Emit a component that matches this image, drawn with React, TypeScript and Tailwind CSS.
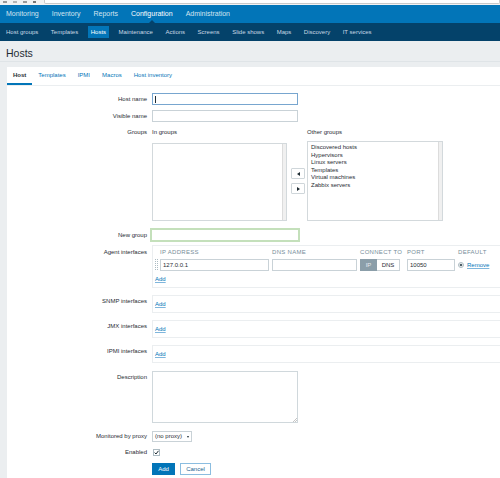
import React from "react";

const mainNav = ["Monitoring", "Inventory", "Reports", "Configuration", "Administration"];
const subNav = [
  "Host groups",
  "Templates",
  "Hosts",
  "Maintenance",
  "Actions",
  "Screens",
  "Slide shows",
  "Maps",
  "Discovery",
  "IT services",
];
const tabs = ["Host", "Templates", "IPMI", "Macros", "Host inventory"];
const otherGroups = [
  "Discovered hosts",
  "Hypervisors",
  "Linux servers",
  "Templates",
  "Virtual machines",
  "Zabbix servers",
];

const FormRow = ({
  label,
  labelClass = "",
  className = "",
  children,
}: {
  label: string;
  labelClass?: string;
  className?: string;
  children: React.ReactNode;
}) => (
  <div className={`flex ${className}`}>
    <div className={`w-[140px] shrink-0 text-right text-[#1f2c33] ${labelClass}`}>{label}</div>
    <div className="ml-[5px] min-w-0 flex-1">{children}</div>
  </div>
);

const AddLink = () => (
  <span className="text-[#0275b8] underline decoration-[#7fb6dc] underline-offset-[1px]">Add</span>
);

const DragHandle = () => (
  <svg width="4" height="12" viewBox="0 0 4 12" className="shrink-0">
    {[0, 1, 2, 3, 4, 5].map((r) => (
      <g key={r} fill="#acbbc2">
        <rect x="0" y={r * 2} width="1" height="1" />
        <rect x="2" y={r * 2} width="1" height="1" />
      </g>
    ))}
  </svg>
);

const InterfaceBox = ({ label }: { label: string }) => (
  <FormRow label={label} labelClass="leading-[10px] pt-[1px]" className="mt-[7px]">
    <div className="h-[18px] border border-r-0 border-[#ebeef0] pl-[2px] pt-[4px] leading-[8px]">
      <AddLink />
    </div>
  </FormRow>
);

export default function App() {
  return (
    <div className="flex h-[478px] w-[500px] flex-col overflow-hidden bg-[#ebeef0] font-['Liberation_Sans',Arial,sans-serif] text-[6px]">
      {/* browser chrome strip */}
      <div className="flex h-[5px] shrink-0 items-start bg-[#f2f2f2]">
        <div className="ml-[3px] mt-[1px] h-[2px] w-[4px] bg-[#9a9a9a]" />
        <div className="ml-[6px] mt-[1px] h-[2px] w-[4px] bg-[#b5b5b5]" />
        <div className="ml-[6px] mt-[1px] h-[2px] w-[4px] bg-[#9a9a9a]" />
        <div className="ml-[6px] mt-[1px] h-[2px] w-[3px] bg-[#777]" />
        <div className="ml-[8px] h-[4px] flex-1 rounded-b-[2px] border-x border-b border-[#c9c9c9] bg-white" />
      </div>

      {/* main nav */}
      <div className="flex h-[18px] shrink-0 items-center gap-[13px] bg-[#0275b8] pl-[6px] text-[7px] text-[#d3e4f0]">
        {mainNav.map((item) => (
          <div key={item} className={`relative leading-[18px] ${item === "Configuration" ? "text-white" : ""}`}>
            {item}
            {item === "Configuration" && (
              <div className="absolute bottom-0 left-1/2 -ml-[3px] h-0 w-0 border-x-[3px] border-b-[3px] border-x-transparent border-b-[#04426a]" />
            )}
          </div>
        ))}
      </div>

      {/* sub nav */}
      <div className="flex h-[18px] shrink-0 items-center gap-[6.5px] bg-[#04426a] pl-[3px] text-[#c9d8e3]">
        {subNav.map((item) => (
          <div
            key={item}
            className={`h-[12px] px-[3px] leading-[12px] ${item === "Hosts" ? "bg-[#0275b8] text-white" : ""}`}
          >
            {item}
          </div>
        ))}
      </div>

      {/* page header */}
      <div className="h-[21px] shrink-0 border-b border-[#dfe4e7] pl-[6px] pt-[6px] text-[10.5px] leading-[12px] text-[#1f2c33]">
        Hosts
      </div>

      {/* white panel */}
      <div className="ml-[7px] mt-[5px] flex-1 bg-white">
        <div className="flex h-[19px] border-b border-[#ebeef0]">
          {tabs.map((tab) => (
            <div
              key={tab}
              className={`px-[6px] leading-[17px] ${
                tab === "Host"
                  ? "border-b-2 border-[#0275b8] font-bold text-[#1f2c33]"
                  : "text-[#0275b8]"
              }`}
            >
              {tab}
            </div>
          ))}
        </div>

        <div className="pt-[7px]">
          <FormRow label="Host name" labelClass="leading-[12px]">
            <div className="flex h-[12px] w-[146px] items-center border border-[#78a6cf] bg-white pl-[2px]">
              <div className="h-[7px] w-px bg-[#1f2c33]" />
            </div>
          </FormRow>

          <FormRow label="Visible name" labelClass="leading-[12px]" className="mt-[5px]">
            <div className="h-[12px] w-[146px] border border-[#c9d2d7] bg-white" />
          </FormRow>

          <FormRow label="Groups" labelClass="leading-[10px]" className="mt-[5px]">
            <div className="flex items-start">
              <div>
                <div className="leading-[10px] text-[#1f2c33]">In groups</div>
                <div className="mt-[6px] flex h-[78px] w-[135px] justify-end border border-[#d3d9dc] bg-white">
                  <div className="w-[4px] border-l border-[#dcdcdc] bg-[#f0f0f0]" />
                </div>
              </div>
              <div className="ml-[4px] pt-[41px]">
                <div className="flex h-[11px] w-[14px] items-center justify-center rounded-[1px] border border-[#cfd6da] bg-white">
                  <div className="h-0 w-0 border-y-[2px] border-r-[3px] border-y-transparent border-r-[#1f2c33]" />
                </div>
                <div className="mt-[4px] flex h-[11px] w-[14px] items-center justify-center rounded-[1px] border border-[#cfd6da] bg-white">
                  <div className="h-0 w-0 border-y-[2px] border-l-[3px] border-y-transparent border-l-[#1f2c33]" />
                </div>
              </div>
              <div className="ml-[2px]">
                <div className="leading-[10px] text-[#1f2c33]">Other groups</div>
                <div className="mt-[4px] flex h-[80px] w-[136px] border border-[#d3d9dc] bg-white">
                  <div className="flex-1 pl-[3px] pt-[2px] text-[#1f2c33]">
                    {otherGroups.map((g) => (
                      <div key={g} className="leading-[7.5px]">
                        {g}
                      </div>
                    ))}
                  </div>
                  <div className="w-[4px] border-l border-[#dcdcdc] bg-[#f0f0f0]" />
                </div>
              </div>
            </div>
          </FormRow>

          <FormRow label="New group" labelClass="leading-[14px]" className="mt-[7px]">
            <div className="-ml-[2px] h-[14px] w-[150px] border-2 border-[#c4e0bb] bg-white" />
          </FormRow>

          <FormRow label="Agent interfaces" labelClass="leading-[10px] pt-[2px]" className="mt-[3px]">
            <div className="h-[43px] border border-r-0 border-[#ebeef0] pt-[2px]">
              <div className="grid grid-cols-[112px_88px_47px_51px_auto] pl-[7px] uppercase leading-[8px] tracking-[0.3px] text-[#768d99]">
                <div>IP address</div>
                <div>DNS name</div>
                <div>Connect to</div>
                <div>Port</div>
                <div>Default</div>
              </div>
              <div className="mt-[3px] flex items-center pl-[2px]">
                <DragHandle />
                <div className="ml-[1px] grid grid-cols-[112px_88px_47px_51px_auto] items-center text-[#1f2c33]">
                  <div className="h-[12px] w-[109px] border border-[#c9d2d7] pl-[2px] leading-[10px]">127.0.0.1</div>
                  <div className="h-[12px] w-[85px] border border-[#c9d2d7]" />
                  <div className="flex h-[12px] w-[40px]">
                    <div className="w-[17px] bg-[#8b9ea9] text-center leading-[12px] text-[#e4eaee]">IP</div>
                    <div className="flex-1 border border-l-0 border-[#c9d2d7] text-center leading-[10px]">DNS</div>
                  </div>
                  <div className="h-[12px] w-[48px] border border-[#c9d2d7] pl-[2px] leading-[10px]">10050</div>
                  <div className="flex items-center">
                    <svg width="6" height="6" viewBox="0 0 6 6">
                      <circle cx="3" cy="3" r="2.5" fill="#fff" stroke="#acbbc2" strokeWidth="1" />
                      <circle cx="3" cy="3" r="1.3" fill="#4f5f68" />
                    </svg>
                    <span className="ml-[3px] text-[#0275b8] underline decoration-[#7fb6dc] underline-offset-[1px]">
                      Remove
                    </span>
                  </div>
                </div>
              </div>
              <div className="mt-[4px] pl-[2px] leading-[8px]">
                <AddLink />
              </div>
            </div>
          </FormRow>

          <InterfaceBox label="SNMP interfaces" />
          <InterfaceBox label="JMX interfaces" />
          <InterfaceBox label="IPMI interfaces" />

          <FormRow label="Description" labelClass="leading-[10px] pt-[1px]" className="mt-[8px]">
            <div className="relative h-[52px] w-[146px] border border-[#d0d8dc] bg-white">
              <svg width="4" height="4" viewBox="0 0 4 4" className="absolute bottom-0 right-0">
                <path d="M4 0 L0 4 M4 2 L2 4" stroke="#a0a0a0" strokeWidth="0.6" />
              </svg>
            </div>
          </FormRow>

          <FormRow label="Monitored by proxy" labelClass="leading-[11px]" className="mt-[8px]">
            <div className="flex h-[11px] w-[40px] items-center justify-between border border-[#c9d2d7] px-[2px] text-[#1f2c33]">
              <span className="leading-[9px]">(no proxy)</span>
              <div className="h-0 w-0 border-x-[1.5px] border-t-[2.5px] border-x-transparent border-t-[#1f2c33]" />
            </div>
          </FormRow>

          <FormRow label="Enabled" labelClass="leading-[7px]" className="mt-[7px]">
            <svg width="7" height="7" viewBox="0 0 7 7" className="ml-[1px] block">
              <rect x="0.5" y="0.5" width="6" height="6" fill="#fff" stroke="#acbbc2" />
              <path d="M1.6 3.6 L3 5 L5.5 1.8" fill="none" stroke="#1f2c33" strokeWidth="1" />
            </svg>
          </FormRow>

          <FormRow label="" className="mt-[7px]">
            <div className="flex">
              <div className="h-[12px] w-[23px] bg-[#0275b8] text-center leading-[12px] text-white">Add</div>
              <div className="ml-[5px] h-[12px] w-[31px] border border-[#8bbde0] text-center leading-[10px] text-[#1b5f8f]">
                Cancel
              </div>
            </div>
          </FormRow>
        </div>
      </div>
    </div>
  );
}
